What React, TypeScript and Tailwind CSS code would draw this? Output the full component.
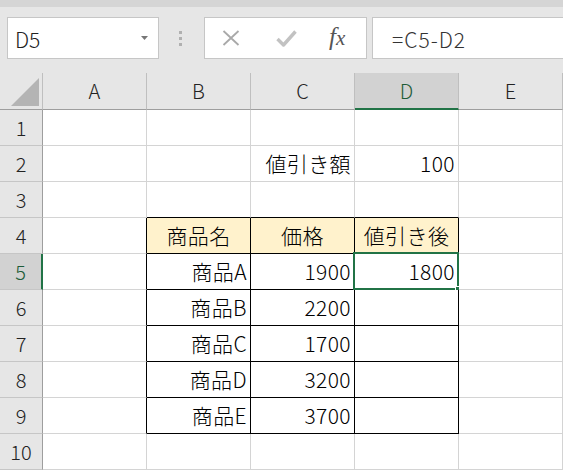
import React from "react"

const font = { fontFamily: '"Noto Sans CJK JP", "Noto Sans", sans-serif' }

const cols = ["A", "B", "C", "D", "E"]
const rows = [1, 2, 3, 4, 5, 6, 7, 8, 9, 10]

type CellData = { text: string; align: "right" | "center" }

const data: Record<string, CellData> = {
  C2: { text: "値引き額", align: "right" },
  D2: { text: "100", align: "right" },
  B4: { text: "商品名", align: "center" },
  C4: { text: "価格", align: "center" },
  D4: { text: "値引き後", align: "center" },
  B5: { text: "商品A", align: "right" },
  B6: { text: "商品B", align: "right" },
  B7: { text: "商品C", align: "right" },
  B8: { text: "商品D", align: "right" },
  B9: { text: "商品E", align: "right" },
  C5: { text: "1900", align: "right" },
  C6: { text: "2200", align: "right" },
  C7: { text: "1700", align: "right" },
  C8: { text: "3200", align: "right" },
  C9: { text: "3700", align: "right" },
  D5: { text: "1800", align: "right" },
}

const inTable = (r: number, c: string) => r >= 4 && r <= 9 && ["B", "C", "D"].includes(c)

function Cell({ r, c }: { r: number; c: string }) {
  const key = `${c}${r}`
  const cell = data[key]
  const blackRight = inTable(r, c) || (c === "A" && r >= 4 && r <= 9)
  const blackBottom = inTable(r, c) || (r === 3 && ["B", "C", "D"].includes(c))
  const header = r === 4 && inTable(r, c)
  const selected = key === "D5"

  return (
    <div
      className={`relative h-[36px] border-r border-b flex items-center text-[21px] font-light text-black ${
        blackRight ? "border-r-black" : "border-r-[#d4d4d4]"
      } ${blackBottom ? "border-b-black" : "border-b-[#d4d4d4]"} ${
        header ? "bg-[#fff2cc]" : "bg-white"
      } ${cell?.align === "center" ? "justify-center" : "justify-end pr-[3px]"}`}
    >
      {cell && <span className="leading-none tracking-[0.4px]">{cell.text}</span>}
      {selected && (
        <>
          <div className="absolute -left-[2px] -top-[2px] -right-[1px] -bottom-[1px] border-2 border-[#217346]" />
          <div className="absolute -right-[4px] -bottom-[4px] w-[7px] h-[7px] bg-[#217346] border border-white" />
        </>
      )}
    </div>
  )
}

export default function App() {
  return (
    <div className="w-[563px] h-[470px] overflow-hidden bg-[#e6e6e6] select-none" style={font}>
      {/* Ribbon edge */}
      <div className="h-[7px] bg-[#d5d5d5]" />

      {/* Formula bar */}
      <div className="flex items-start pt-[10px] h-[66px]">
        <div className="ml-[7px] w-[152px] h-[42px] bg-white border border-[#c6c6c6] flex items-center justify-between pl-[7px] pr-[10px]">
          <span className="text-[21px] font-light text-[#222] leading-none mt-[2px]">D5</span>
          <svg width="7" height="4" viewBox="0 0 7 4">
            <polygon points="0,0 7,0 3.5,4" fill="#777" />
          </svg>
        </div>

        <div className="ml-[20px] w-[3px] h-[42px] flex flex-col justify-center gap-[3px]">
          <div className="w-[3px] h-[3px] bg-[#b0b0b0]" />
          <div className="w-[3px] h-[3px] bg-[#b0b0b0]" />
          <div className="w-[3px] h-[3px] bg-[#b0b0b0]" />
        </div>

        <div className="ml-[22px] w-[163px] h-[42px] bg-white border border-[#c6c6c6] flex items-center">
          <svg className="ml-[17px]" width="18" height="16" viewBox="0 0 18 16">
            <path d="M1.5 1 L16.5 15 M16.5 1 L1.5 15" stroke="#a9a9a9" strokeWidth="1.8" fill="none" />
          </svg>
          <svg className="ml-[36px]" width="21" height="17" viewBox="0 0 21 17">
            <path d="M1.5 9 L7.5 15 L19.5 1.5" stroke="#c2c2c2" strokeWidth="3.4" fill="none" strokeLinejoin="round" />
          </svg>
          <span
            className="ml-[32px] text-[25px] italic text-[#555] leading-none -mt-[3px]"
            style={{ fontFamily: '"Liberation Serif", "DejaVu Serif", serif' }}
          >
            f<span className="text-[21px]">x</span>
          </span>
        </div>

        <div className="ml-[5px] flex-1 h-[42px] bg-white border border-[#c6c6c6] border-r-0 flex items-center pl-[19px]">
          <span className="text-[21px] font-light text-[#333] leading-none tracking-[1px] mt-[2px]">=C5-D2</span>
        </div>
      </div>

      {/* Grid */}
      <div className="grid grid-cols-[43px_104px_104px_104px_104px_104px] font-light">
        {/* Corner */}
        <div className="h-[37px] border-r border-b border-r-[#bfbfbf] border-b-[#9e9e9e] flex items-end justify-end pr-[3px] pb-[3px]">
          <svg width="28" height="28" viewBox="0 0 28 28">
            <polygon points="28,0 28,28 0,28" fill="#b4b4b4" />
          </svg>
        </div>
        {cols.map((c) =>
          c === "D" ? (
            <div
              key={c}
              className="h-[37px] bg-[#d2d2d2] border-r border-r-[#bfbfbf] border-b-2 border-b-[#217346] flex items-center justify-center text-[20px] text-[#1d5c38]"
            >
              {c}
            </div>
          ) : (
            <div
              key={c}
              className="h-[37px] border-r border-b border-r-[#bfbfbf] border-b-[#9e9e9e] flex items-center justify-center text-[20px] text-[#222]"
            >
              {c}
            </div>
          )
        )}

        {rows.map((r) => (
          <React.Fragment key={r}>
            {r === 5 ? (
              <div className="h-[36px] bg-[#d2d2d2] border-b border-b-[#c6c6c6] border-r-2 border-r-[#217346] flex items-center justify-center text-[20px] text-[#1d5c38]">
                {r}
              </div>
            ) : (
              <div className="h-[36px] border-b border-r border-b-[#c6c6c6] border-r-[#9e9e9e] flex items-center justify-center text-[20px] text-[#222]">
                {r}
              </div>
            )}
            {cols.map((c) => (
              <Cell key={c} r={r} c={c} />
            ))}
          </React.Fragment>
        ))}
      </div>
    </div>
  )
}
